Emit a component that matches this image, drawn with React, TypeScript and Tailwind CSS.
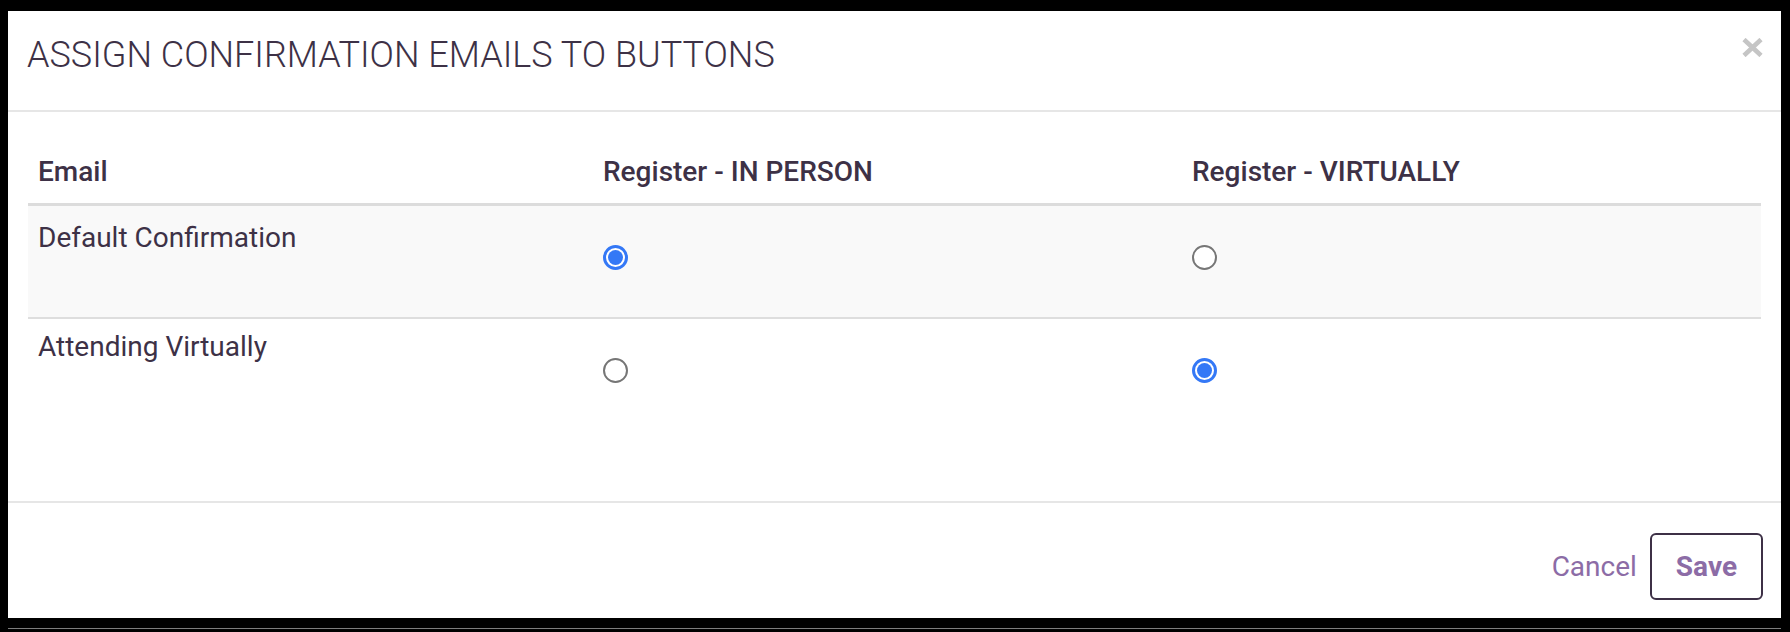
import React from 'react';

const emails = [
  { name: 'Default Confirmation', inPerson: true, virtual: false, striped: true, textPad: 'pt-[11px]' },
  { name: 'Attending Virtually', inPerson: false, virtual: true, striped: false, textPad: 'pt-[7px]' },
];

const Radio: React.FC<{ checked: boolean }> = ({ checked }) =>
  checked ? (
    <span className="flex h-[25px] w-[25px] items-center justify-center rounded-full border-[3px] border-[#3478f6] bg-white">
      <span className="h-[15px] w-[15px] rounded-full bg-[#3478f6]" />
    </span>
  ) : (
    <span className="block h-[25px] w-[25px] rounded-full border-2 border-[#767676] bg-white" />
  );

const CloseIcon = () => (
  <svg width="21" height="19" viewBox="0 0 21 19" className="block">
    <path d="M2 1.5 L19 17.5 M19 1.5 L2 17.5" stroke="#c5c5c5" strokeWidth="4.6" strokeLinecap="butt" />
  </svg>
);

export default function App() {
  return (
    <div className="flex h-[632px] w-full flex-col bg-black pl-[8px] pr-[9px] pt-[11px] font-['Roboto',sans-serif] text-[#3d3146]">
      <div className="flex h-[607px] flex-col bg-white">
        {/* header */}
        <div className="flex items-start justify-between border-b-2 border-[#e6e6e6] pl-[19px] pr-[18px] pt-[23px] pb-[34px]">
          <h1 className="text-[36px] font-light leading-[42px]">ASSIGN CONFIRMATION EMAILS TO BUTTONS</h1>
          <button className="mt-[4px]" aria-label="Close">
            <CloseIcon />
          </button>
        </div>

        {/* body */}
        <div className="flex-1 px-[20px] pt-[29px]">
          <div className="grid grid-cols-[565px_589px_1fr] border-b-[3px] border-[#dcdcdc] text-[28px] font-medium leading-[42px]">
            <div className="px-[10px] py-[10px]">Email</div>
            <div className="px-[10px] py-[10px]">Register - IN PERSON</div>
            <div className="px-[10px] py-[10px]">Register - VIRTUALLY</div>
          </div>
          {emails.map((e, i) => (
            <div
              key={e.name}
              className={
                'grid h-[111px] grid-cols-[565px_589px_1fr] text-[28px] leading-[42px] ' +
                (e.striped ? 'bg-[#f9f9f9] ' : '') +
                (i === 0 ? 'box-content border-b-2 border-[#dedede]' : '')
              }
            >
              <div className={'px-[10px] ' + e.textPad}>{e.name}</div>
              <div className="px-[10px] pt-[39px]">
                <Radio checked={e.inPerson} />
              </div>
              <div className="px-[10px] pt-[39px]">
                <Radio checked={e.virtual} />
              </div>
            </div>
          ))}
        </div>

        {/* footer */}
        <div className="flex items-center justify-end gap-[13px] border-t-2 border-[#e6e6e6] pb-[18px] pr-[18px] pt-[30px]">
          <button className="text-[28px] leading-[42px] text-[#8c6ca6]">Cancel</button>
          <button className="rounded-[6px] border-2 border-[#3d3046] px-[24px] py-[10.5px] text-[28px] font-bold leading-[42px] text-[#8c6ca6]">
            Save
          </button>
        </div>
      </div>
      <div className="flex-1" />
      <div className="mb-[3px] h-px w-full bg-[#7d7d7d]" />
    </div>
  );
}
